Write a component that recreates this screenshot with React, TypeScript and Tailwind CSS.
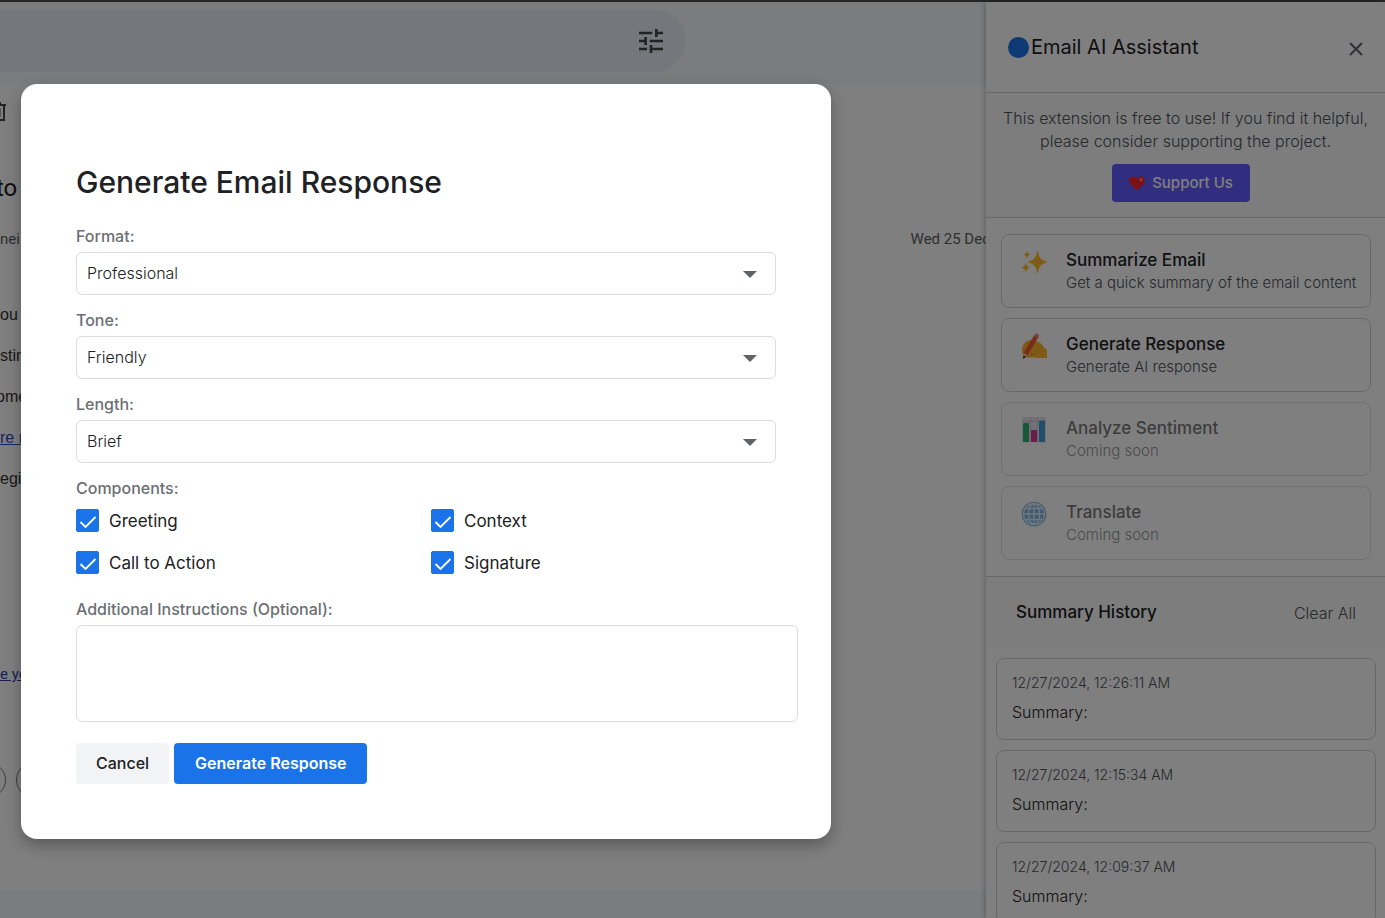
import { useState, type ReactNode } from "react";

function SparklesIcon() {
  return (
    <svg viewBox="0 0 26 26" className="size-[26px] shrink-0" aria-hidden="true">
      <g fill="#fdb92c">
        <path d="M16.500 2c.8 6.500 3 9 9 11-6 2-8.200 4.500-9 11-.8-6.500-3-9-9-11 6-2 8.200-4.500 9-11z" stroke="#fdb92c" strokeWidth="1" strokeLinejoin="round" />
        <path d="M6 1.500c.5 2.600 1.200 3.500 3.500 4.200C7.200 6.400 6.500 7.400 6 10 5.500 7.400 4.800 6.400 2.500 5.700 4.800 5 5.500 4.100 6 1.500z" />
        <path d="M4.800 13.500c.7 3 1.500 4.200 4.200 5-2.700.8-3.500 2-4.200 5-.7-3-1.500-4.200-4.300-5 2.800-.8 3.600-2 4.300-5z" />
      </g>
    </svg>
  );
}

function WritingIcon() {
  return (
    <svg viewBox="0 0 26 26" className="size-[26px] shrink-0" aria-hidden="true">
      <path
        d="M1 15.500c1-5 4-8 8-8.300 3-.2 5 .2 7.500 1.200 2.500 1 5 3.300 6.500 6l3 2.300V25H16c-1.500-.2-2-1-3.500-1-1 .8-2 .9-3 .2-1.200.5-3 .6-4.500 0C1.500 22.500.3 19 1 15.500z"
        fill="#fcb42a"
      />
      <path d="M9.500 22.500c1-1.500 2.500-1.800 4-.5" fill="none" stroke="#d98a1a" strokeWidth="1" />
      <path d="M13 2.500 17 4.700 6.500 22.500 2.500 20z" fill="#ef5a32" />
      <path d="M13.800 1.200c1.200-1.600 5 .3 4.200 2.200L17 5.200l-4-2.200z" fill="#f08a83" />
      <path d="M2.500 20l4 2.500L2.300 25.600z" fill="#f0c8a0" />
      <path d="M2.400 22.500l2.400 1.600-2.600 1.900z" fill="#222" />
    </svg>
  );
}

function ChartIcon() {
  return (
    <svg viewBox="0 0 26 26" className="size-[26px] shrink-0" aria-hidden="true">
      <rect x="1" y="0" width="24" height="25.500" rx="1" fill="#e6e2ec" />
      <path d="M1 4.500h24M9.500 0v25M16.500 0v25" stroke="#c9c3d2" strokeWidth=".8" />
      <rect x="2" y="6" width="6" height="19" rx="1" fill="#2fb073" />
      <rect x="10" y="13" width="6" height="12" rx="1" fill="#d63d97" />
      <rect x="18" y="3.500" width="6" height="21.500" rx="1" fill="#3f9fd8" />
    </svg>
  );
}

function GlobeIcon() {
  return (
    <svg viewBox="0 0 26 26" className="size-[26px] shrink-0" aria-hidden="true">
      <circle cx="13" cy="13" r="12.300" fill="#7fb6e4" />
      <g fill="none" stroke="#e3f0fa" strokeWidth="1.300">
        <circle cx="13" cy="13" r="10.500" />
        <ellipse cx="13" cy="13" rx="5.500" ry="10.500" />
        <path d="M13 2.500v21M2.500 13h21M4.500 7.500h17M4.500 18.500h17" />
      </g>
    </svg>
  );
}

function HeartIcon() {
  return (
    <svg viewBox="0 0 18 16" className="h-4 w-[18px]" aria-hidden="true">
      <path d="M9 15C5 12 1 9 1 5.300 1 1.500 6.500 0 9 3.600 11.500 0 17 1.500 17 5.300 17 9 13 12 9 15z" fill="#f5222d" />
      <circle cx="13" cy="4.800" r="1.800" fill="#ff7a6b" />
    </svg>
  );
}

function TuneIcon() {
  return (
    <svg viewBox="3 3 18 18" className="size-6" fill="#444746" aria-hidden="true">
      <path d="M3 17v2h6v-2H3zM3 5v2h10V5H3zm10 16v-2h8v-2h-8v-2h-2v6h2zM7 9v2H3v2h4v2h2V9H7zm14 4v-2H11v2h10zm-6-4h2V7h4V5h-4V3h-2v6z" />
    </svg>
  );
}

function TrashIcon() {
  return (
    <svg viewBox="0 0 20 20" className="size-5" fill="none" stroke="#444746" strokeWidth="2" aria-hidden="true">
      <path d="M1 3h18M7 3V1h6v2M3 3v15h14V3M8 6.500v8M12.500 6.500v8" />
    </svg>
  );
}

function MailPage() {
  return (
    <div className="flex min-w-0 flex-1 flex-col bg-[#f6f8fc] font-['Roboto','Liberation_Sans',sans-serif]">
      <header className="flex h-[82px] shrink-0 items-center pb-1">
        <div className="flex h-[62px] w-[686px] items-center justify-end rounded-r-full bg-[#e9eef8] pr-[23px]">
          <button type="button" aria-label="Search options">
            <TuneIcon />
          </button>
        </div>
      </header>
      <main className="mb-7 min-h-0 flex-1 overflow-hidden bg-white text-base whitespace-nowrap text-[#333]">
        <div className="flex h-14 items-center">
          <button type="button" aria-label="Delete" className="-ml-[13px]">
            <TrashIcon />
          </button>
        </div>
        <h1 className="-ml-1 flex h-[87px] items-center pt-2 text-2xl text-[#1f1f1f]">to</h1>
        <div className="flex justify-between text-[15px] leading-6 text-[#5e5e5e]">
          <span>nei</span>
          <span className="-mr-1">Wed 25 Dec</span>
        </div>
        <div className="mt-[43px] font-['Liberation_Sans',sans-serif] leading-[41px]">
          <p>ou</p>
          <p>stin</p>
          <p className="-ml-1">ome</p>
          <p>
            <a href="#more" className="text-[#3350c0] underline">re n</a>
          </p>
          <p>egi</p>
        </div>
        <p className="mt-[165px] text-[15px] leading-5">
          <a href="#you" className="text-[#333fb0] underline">e yo</a>
        </p>
        <div className="mt-[78px] flex gap-2.5">
          <button type="button" aria-label="Reply" className="-ml-[114px] h-9 w-[120px] rounded-full border border-[#747775]" />
          <button type="button" aria-label="Forward" className="h-9 w-[120px] rounded-full border border-[#747775]" />
        </div>
      </main>
    </div>
  );
}

function ActionCard({ icon, title, text, disabled }: { icon: ReactNode; title: string; text: string; disabled?: boolean }) {
  return (
    <button
      type="button"
      disabled={disabled}
      className="group flex h-[74px] items-start gap-[19px] rounded-lg border border-[#cfd1d4] bg-white pt-[14px] pr-3 pl-[19px] text-left disabled:border-[#e0e1e3]"
    >
      {icon}
      <span className="flex flex-col whitespace-nowrap group-disabled:opacity-60">
        <span className="text-[17px] leading-[23px] font-medium text-[#202124]">{title}</span>
        <span className="text-[15px] leading-[22px] font-light text-[#4d5156]">{text}</span>
      </span>
    </button>
  );
}

const history = ["12/27/2024, 12:26:11 AM", "12/27/2024, 12:15:34 AM", "12/27/2024, 12:09:37 AM"];

function AssistantPanel() {
  return (
    <aside className="flex w-[399px] shrink-0 flex-col overflow-hidden bg-white shadow-[-2px_0_5px_rgba(0,0,0,0.2)]">
      <div className="flex h-[91px] shrink-0 items-center justify-between border-b border-[#cfd1d4] pr-5 pl-[22px]">
        <h2 className="flex items-center gap-0.5 text-xl leading-7 text-[#202124]">
          <span className="size-[21px] rounded-full bg-[#1a73e8]" />
          Email AI Assistant
        </h2>
        <button type="button" aria-label="Close" className="pt-1">
          <svg viewBox="0 0 18 18" className="size-[18px]" stroke="#5f6368" strokeWidth="2" aria-hidden="true">
            <path d="M3 3l12 12M15 3L3 15" />
          </svg>
        </button>
      </div>
      <div className="flex h-[125px] shrink-0 flex-col items-center border-b border-[#cfd1d4] bg-[#fafafb] pt-[14px]">
        <p className="text-center text-base leading-[23px] font-light text-[#4d5156]">
          This extension is free to use! If you find it helpful,
          <br />
          please consider supporting the project.
        </p>
        <button type="button" className="mt-[11px] mr-2.5 flex h-[38px] w-[138px] items-center justify-center gap-1.5 rounded bg-[#635bff] text-[15px] font-medium text-white">
          <HeartIcon />
          Support Us
        </button>
      </div>
      <div className="flex shrink-0 flex-col gap-2.5 border-b border-[#cfd1d4] py-4 pr-[14px] pl-[15px]">
        <ActionCard icon={<SparklesIcon />} title="Summarize Email" text="Get a quick summary of the email content" />
        <ActionCard icon={<WritingIcon />} title="Generate Response" text="Generate AI response" />
        <ActionCard icon={<ChartIcon />} title="Analyze Sentiment" text="Coming soon" disabled />
        <ActionCard icon={<GlobeIcon />} title="Translate" text="Coming soon" disabled />
      </div>
      <div className="flex h-[71px] shrink-0 items-center justify-between bg-[#fafafb] pr-[29px] pl-[30px]">
        <h3 className="text-[17px] font-medium text-[#202124]">Summary History</h3>
        <button type="button" className="text-base font-light text-[#4d5156]">Clear All</button>
      </div>
      <div className="flex flex-col gap-2.5 pt-2.5 pr-[9px] pl-2.5">
        {history.map((time) => (
          <article key={time} className="flex h-[82px] shrink-0 flex-col gap-[7px] rounded-lg border border-[#cfd1d4] px-[15px] pt-[14px]">
            <time className="text-sm leading-5 font-light text-[#4d5156]">{time}</time>
            <p className="text-base leading-6 font-light text-[#202124]">Summary:</p>
          </article>
        ))}
      </div>
    </aside>
  );
}

function SelectField({ id, label, options }: { id: string; label: string; options: string[] }) {
  return (
    <div className="mb-[15px] flex flex-col">
      <label htmlFor={id} className="mb-[5px] text-base leading-[21px] font-medium text-[#6b6f74]">{label}</label>
      <div className="relative flex">
        <select id={id} className="h-[43px] w-full appearance-none rounded-md border border-[#dadce0] bg-white px-2.5 pb-0.5 text-base font-light text-[#202124]">
          {options.map((option) => (
            <option key={option}>{option}</option>
          ))}
        </select>
        <svg viewBox="0 0 14 7" className="pointer-events-none absolute top-[19px] right-[19px] h-[7px] w-[14px]" aria-hidden="true">
          <path d="M0 0h14L7 7z" fill="#5f6368" />
        </svg>
      </div>
    </div>
  );
}

function CheckField({ label }: { label: string }) {
  const [checked, setChecked] = useState(true);
  return (
    <label className="flex h-6 items-center gap-2.5 text-[17px] text-[#202124]">
      <span className="relative flex">
        <input
          type="checkbox"
          checked={checked}
          onChange={(event) => setChecked(event.target.checked)}
          className="size-[23px] appearance-none rounded-xs border border-[#5f6368] bg-white checked:border-[#1a73e8] checked:bg-[#1a73e8]"
        />
        {checked && (
          <svg viewBox="0 0 23 23" className="pointer-events-none absolute inset-0 size-[23px]" aria-hidden="true">
            <path d="M4.500 13l5 5L19.500 8" fill="none" stroke="#fff" strokeWidth="1.800" />
          </svg>
        )}
      </span>
      <span className="pt-0.5 leading-5">{label}</span>
    </label>
  );
}

function ResponseDialog() {
  return (
    <form
      role="dialog"
      aria-labelledby="dialog-title"
      onSubmit={(event) => event.preventDefault()}
      className="mt-[5px] w-[810px] rounded-2xl bg-white px-[55px] pt-[78px] pb-[55px] shadow-[0_6px_16px_rgba(0,0,0,0.3)]"
    >
      <h2 id="dialog-title" className="mb-[24px] text-[30px] leading-10 font-medium text-[#202124]">Generate Email Response</h2>
      <SelectField id="format" label="Format:" options={["Professional", "Casual"]} />
      <SelectField id="tone" label="Tone:" options={["Friendly", "Formal"]} />
      <SelectField id="length" label="Length:" options={["Brief", "Detailed"]} />
      <fieldset className="mb-[25px]">
        <legend className="mb-[9px] text-base leading-[21px] font-medium text-[#6b6f74]">Components:</legend>
        <div className="grid grid-cols-2 gap-x-2.5 gap-y-[18px]">
          <CheckField label="Greeting" />
          <CheckField label="Context" />
          <CheckField label="Call to Action" />
          <CheckField label="Signature" />
        </div>
      </fieldset>
      <label htmlFor="notes" className="mb-[5px] block text-base leading-[21px] font-medium text-[#6b6f74]">
        Additional Instructions (Optional):
      </label>
      <div className="-mr-[22px] flex">
        <textarea id="notes" className="h-[97px] w-full resize-none rounded-md border border-[#dadce0] p-2.5 text-base font-light" />
      </div>
      <div className="mt-[21px] flex gap-[5px]">
        <button type="button" className="h-[41px] rounded bg-[#f1f3f4] px-5 pb-0.5 text-base font-medium text-[#202124]">Cancel</button>
        <button type="submit" className="h-[41px] rounded bg-[#1a73e8] px-[21px] pb-0.5 text-base font-semibold text-white">Generate Response</button>
      </div>
    </form>
  );
}

export default function App() {
  return (
    <div className="relative h-screen overflow-hidden bg-[#4a4a4c] font-['Inter','Open_Sans',sans-serif]">
      <div className="flex h-full pt-0.5">
        <MailPage />
        <AssistantPanel />
      </div>
      <div className="absolute inset-0 flex items-center bg-black/50 pl-[21px]">
        <ResponseDialog />
      </div>
    </div>
  );
}
